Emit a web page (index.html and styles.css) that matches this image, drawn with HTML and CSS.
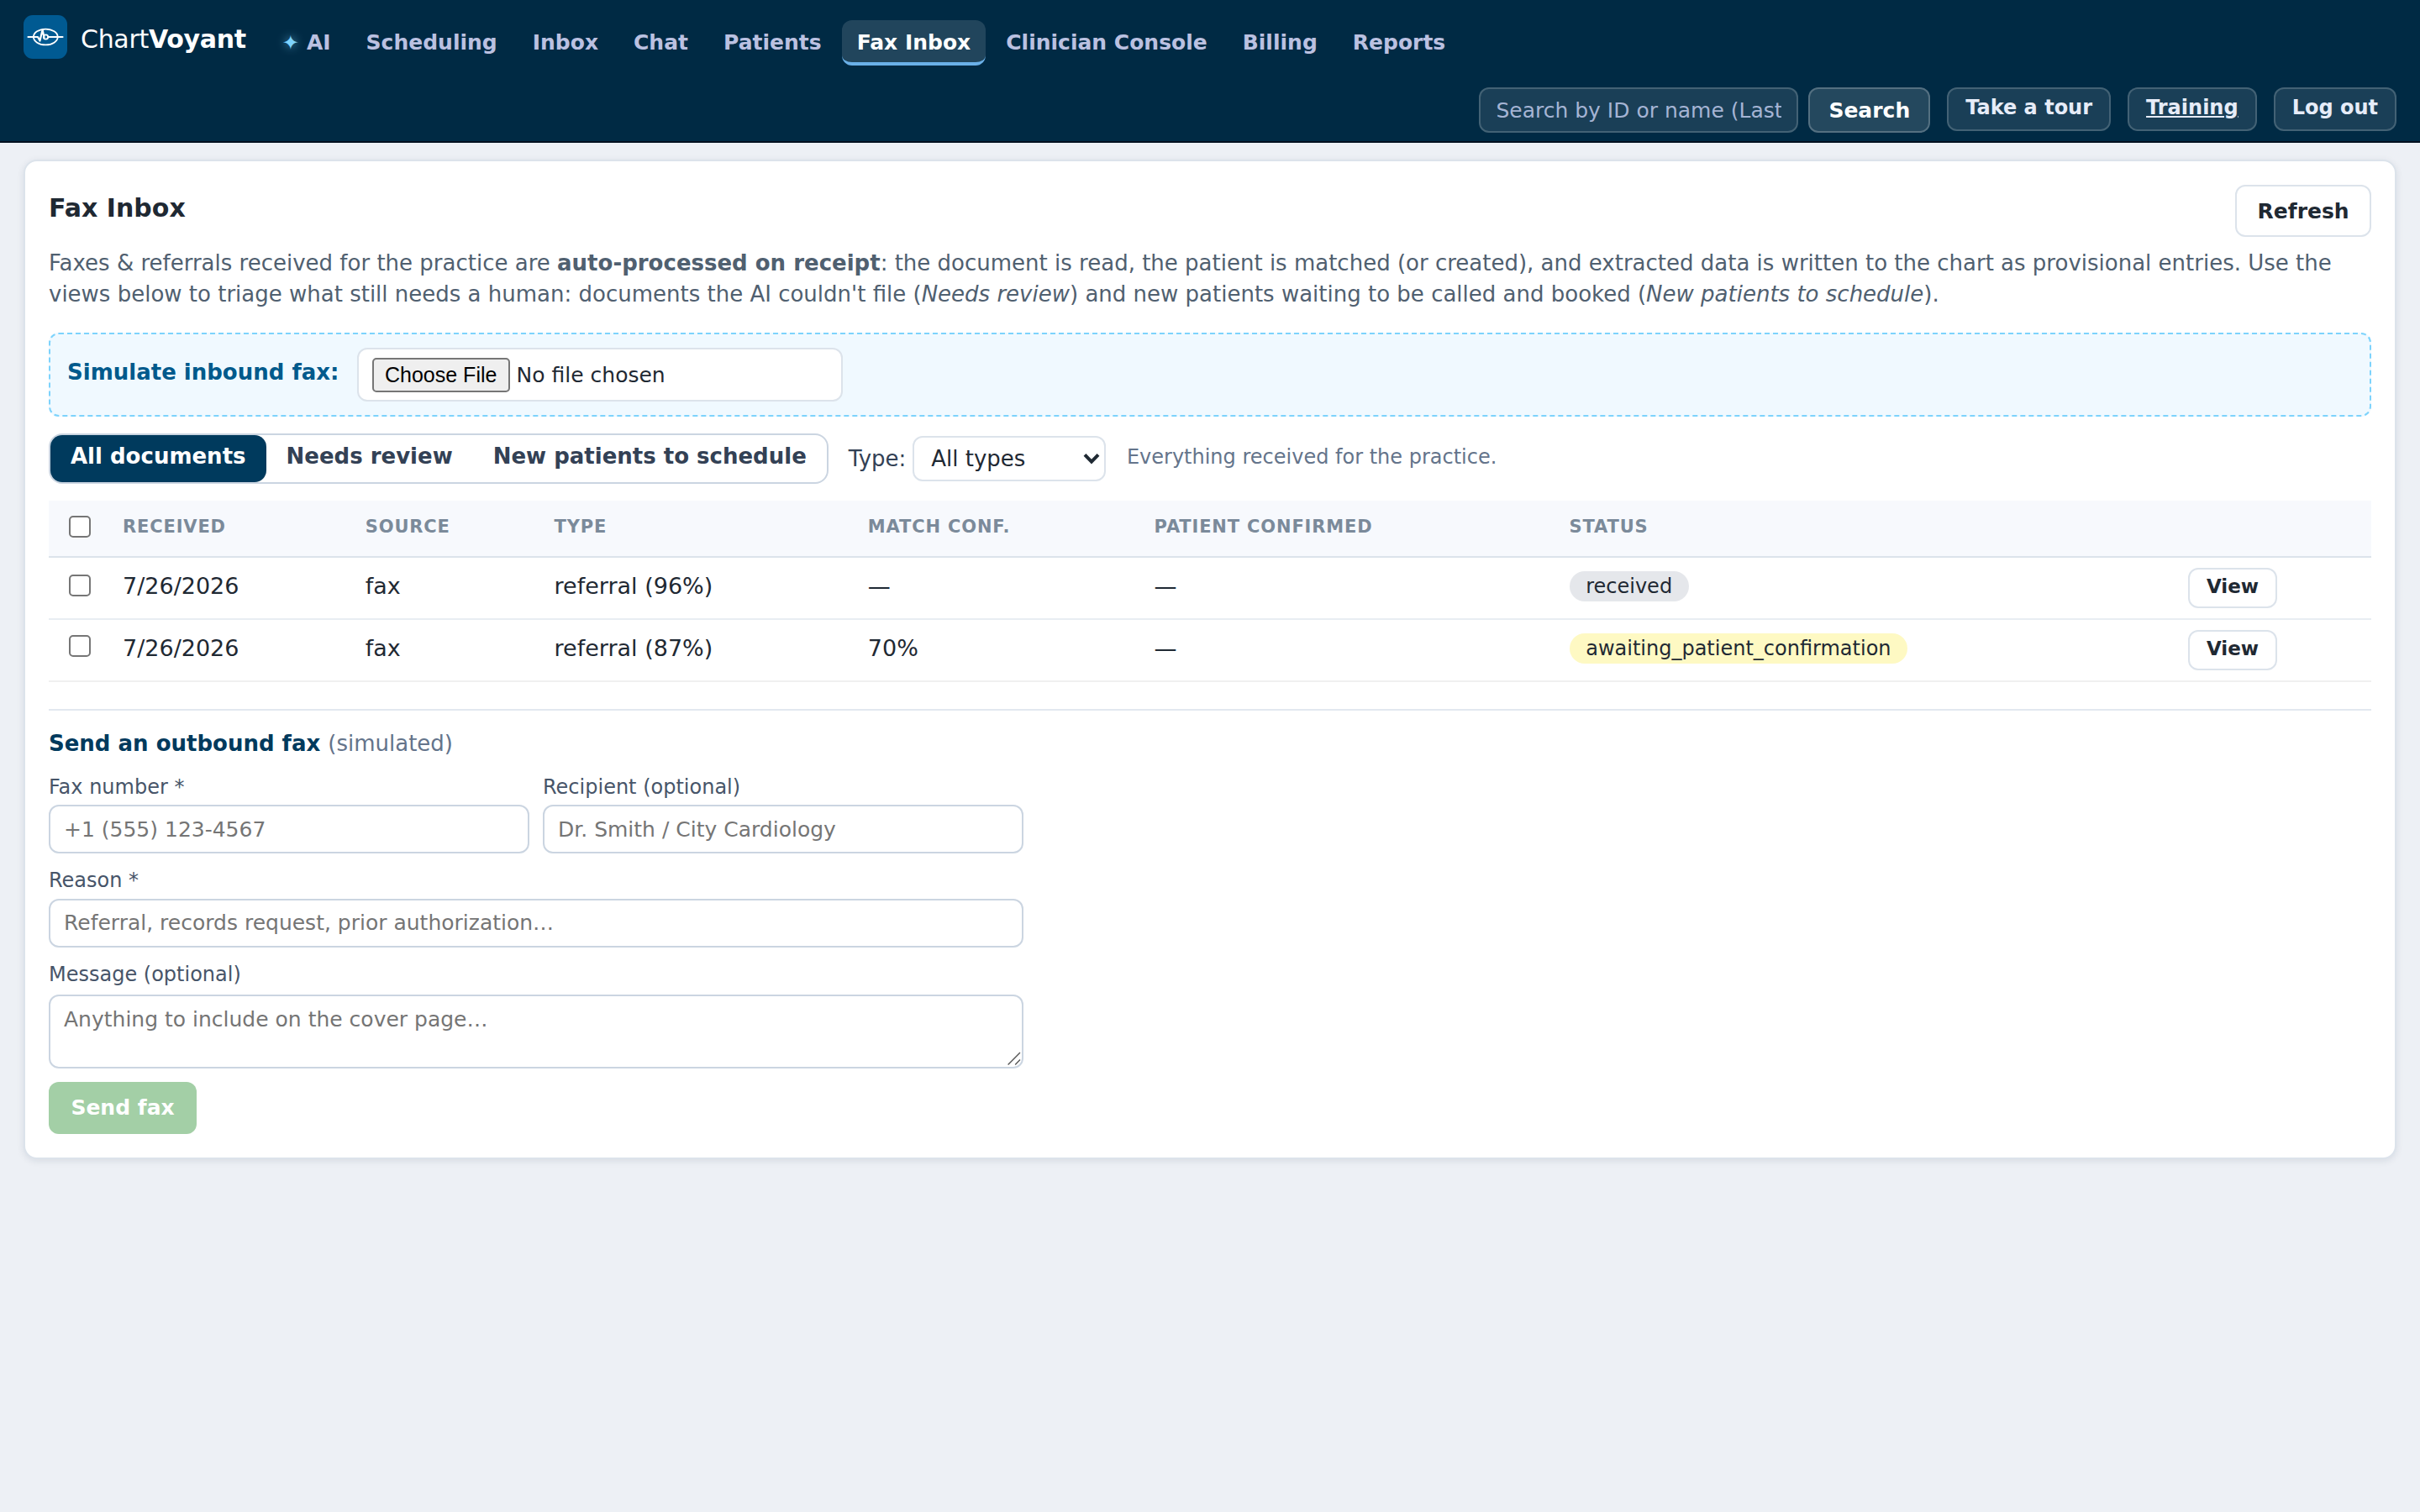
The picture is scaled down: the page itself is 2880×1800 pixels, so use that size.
FILE: index.html
```html
<!DOCTYPE html>
<html lang="en">
<head>
    <meta charset="UTF-8">
    <meta name="viewport" content="width=device-width, initial-scale=1.0">
    <title>ChartVoyant - Fax Inbox</title>
    <link rel="stylesheet" href="styles.css">
</head>
<body>
    <header class="topbar">
        <div class="topbar-main">
            <a class="brand">
                <svg class="brand-logo" viewBox="0 0 52 52" fill="none" stroke="#fff" stroke-width="2.2" stroke-linecap="round" stroke-linejoin="round">
                    <rect width="52" height="52" rx="11" fill="#005a92" stroke="none"/>
                    <ellipse cx="26.3" cy="26" rx="14.4" ry="9.4" stroke-width="1.8"/>
                    <path d="M5.5 26H17l2.5 4.5L22.6 17.5l1.9 9"/>
                    <circle cx="26.5" cy="26" r="2.7" stroke-width="1.8"/>
                    <path d="M29.5 26h17"/>
                </svg>
                <span class="brand-name">Chart<b>Voyant</b></span>
            </a>
            <nav class="nav">
                <a class="nav-link"><span class="spark">✦</span>AI</a>
                <a class="nav-link">Scheduling</a>
                <a class="nav-link">Inbox</a>
                <a class="nav-link">Chat</a>
                <a class="nav-link">Patients</a>
                <a class="nav-link active">Fax Inbox</a>
                <a class="nav-link">Clinician Console</a>
                <a class="nav-link">Billing</a>
                <a class="nav-link">Reports</a>
            </nav>
        </div>
        <div class="topbar-tools">
            <form class="search">
                <input class="search-input" type="text" placeholder="Search by ID or name (Last, First)">
                <button class="search-btn" type="button">Search</button>
            </form>
            <a class="tool-btn">Take a tour</a>
            <a class="tool-btn underlined">Training</a>
            <a class="tool-btn">Log out</a>
        </div>
    </header>

    <main class="card">
        <div class="card-head">
            <h1>Fax Inbox</h1>
            <button class="btn">Refresh</button>
        </div>
        <p class="intro">
            Faxes &amp; referrals received for the practice are <b>auto-processed on receipt</b>: the document is read, the patient is matched (or created), and extracted data is written to the chart as provisional entries. Use the views below to triage what still needs a human: documents the AI couldn't file (<i>Needs review</i>) and new patients waiting to be called and booked (<i>New patients to schedule</i>).
        </p>

        <div class="simulate">
            <label class="simulate-label" for="faxFile">Simulate inbound fax:</label>
            <input class="file-input" id="faxFile" type="file">
        </div>

        <div class="filters">
            <div class="tabs">
                <button class="tab active">All documents</button>
                <button class="tab">Needs review</button>
                <button class="tab">New patients to schedule</button>
            </div>
            <label class="type-filter">Type:
                <span class="select-wrap">
                    <select class="type-select">
                        <option>All types</option>
                    </select>
                    <svg class="select-arrow" viewBox="0 0 10 7" fill="none" stroke="#1f2933" stroke-width="2">
                        <path d="M1 1.2l4 4.1 4-4.1"/>
                    </svg>
                </span>
            </label>
            <span class="hint">Everything received for the practice.</span>
        </div>

        <table class="docs">
            <colgroup>
                <col class="col-check">
                <col class="col-received">
                <col class="col-source">
                <col class="col-type">
                <col class="col-match">
                <col class="col-confirmed">
                <col class="col-status">
                <col>
            </colgroup>
            <thead>
                <tr>
                    <th><input type="checkbox"></th>
                    <th>Received</th>
                    <th>Source</th>
                    <th>Type</th>
                    <th>Match conf.</th>
                    <th>Patient confirmed</th>
                    <th>Status</th>
                    <th></th>
                </tr>
            </thead>
            <tbody>
                <tr>
                    <td><input type="checkbox"></td>
                    <td>7/26/2026</td>
                    <td>fax</td>
                    <td>referral (96%)</td>
                    <td>—</td>
                    <td>—</td>
                    <td><span class="pill">received</span></td>
                    <td class="actions"><button class="btn btn-small">View</button></td>
                </tr>
                <tr>
                    <td><input type="checkbox"></td>
                    <td>7/26/2026</td>
                    <td>fax</td>
                    <td>referral (87%)</td>
                    <td>70%</td>
                    <td>—</td>
                    <td><span class="pill pill-waiting">awaiting_patient_confirmation</span></td>
                    <td class="actions"><button class="btn btn-small">View</button></td>
                </tr>
            </tbody>
        </table>

        <section class="outbound">
            <h2>Send an outbound fax <span>(simulated)</span></h2>
            <form class="fax-form">
                <div class="field-row">
                    <label class="field">Fax number *
                        <input type="text" placeholder="+1 (555) 123-4567">
                    </label>
                    <label class="field">Recipient (optional)
                        <input type="text" placeholder="Dr. Smith / City Cardiology">
                    </label>
                </div>
                <label class="field">Reason *
                    <input type="text" placeholder="Referral, records request, prior authorization…">
                </label>
                <label class="field message-field">Message (optional)
                    <textarea placeholder="Anything to include on the cover page…"></textarea>
                    <svg class="resize-grip" viewBox="0 0 8 8" stroke="#555" stroke-width="0.7">
                        <path d="M0.3 7.7l7.2-7.2M4.6 7.7l2.9-2.9"/>
                    </svg>
                </label>
                <button class="send-btn" type="button" disabled>Send fax</button>
            </form>
        </section>
    </main>
</body>
</html>
```

FILE: styles.css
```css
* {
    box-sizing: border-box;
}
html {
    zoom: 2;
}
body {
    margin: 0;
    background: #edf0f5;
    color: #1f2933;
    font-family: "DejaVu Sans", sans-serif;
    font-size: 13px;
    line-height: 1.4;
}
button, input, select, textarea {
    font-family: inherit;
    font-size: 12.5px;
}

/* top bar */
.topbar {
    height: 85px;
    padding: 9px 14px 0;
    background: #002a44;
    border-bottom: 1px solid #00101f;
}
.topbar-main {
    display: flex;
    align-items: flex-start;
    height: 43px;
}
.brand {
    display: flex;
    align-items: center;
    gap: 8px;
    margin-right: 12.5px;
    color: #fff;
}
.brand-logo {
    display: block;
    width: 26px;
    height: 26px;
}
.brand-name {
    font-size: 15px;
    line-height: 18px;
    padding-top: 3px;
    letter-spacing: -0.15px;
}
.nav {
    display: flex;
    gap: 3px;
    padding-top: 3px;
}
.nav-link {
    height: 27px;
    padding: 6px 9px 4px;
    border-bottom: 2px solid transparent;
    border-radius: 6px;
    color: #bbc1e1;
    font-size: 12.5px;
    font-weight: bold;
    line-height: 15px;
    white-space: nowrap;
}
.nav-link.active {
    background: rgba(255, 255, 255, 0.13);
    border-bottom-color: #6ab0e8;
    color: #fff;
}
.spark {
    margin-right: 4.5px;
    color: #7dd3fc;
    font-size: 12px;
    font-weight: normal;
    text-shadow: 0 0 6px rgba(125, 211, 252, 0.7);
}
.topbar-tools {
    display: flex;
    justify-content: flex-end;
    align-items: flex-start;
    gap: 10px;
}
.search {
    display: flex;
    gap: 6px;
}
.search-input {
    width: 190px;
    height: 27px;
    padding: 0 9px;
    background: rgba(255, 255, 255, 0.1);
    border: 1px solid rgba(255, 255, 255, 0.18);
    border-radius: 6px;
    color: #fff;
}
.search-input::placeholder {
    color: #a5b4d4;
}
.search-btn {
    height: 27px;
    padding: 0 11px;
    background: rgba(255, 255, 255, 0.14);
    border: 1px solid rgba(255, 255, 255, 0.22);
    border-radius: 6px;
    color: #fff;
    font-weight: bold;
}
.tool-btn {
    height: 26px;
    padding: 4px 10px 6px;
    background: rgba(255, 255, 255, 0.1);
    border: 1px solid rgba(255, 255, 255, 0.18);
    border-radius: 6px;
    color: #e6ecf8;
    font-size: 12px;
    font-weight: bold;
    line-height: 14px;
}
.tool-btn.underlined {
    text-decoration: underline;
}

/* card */
.card {
    margin: 10px 14px;
    padding: 14px;
    background: #fff;
    border: 1px solid #dce3eb;
    border-radius: 8px;
    box-shadow: 0 1px 4px rgba(15, 40, 70, 0.1);
}
.card-head {
    display: flex;
    justify-content: space-between;
    align-items: center;
}
h1 {
    margin: 0 0 3px;
    font-size: 15px;
}
.btn {
    padding: 7.5px 12.2px 6.5px;
    background: #fff;
    border: 1px solid #dce3eb;
    border-radius: 6px;
    color: #1f2933;
    font-weight: bold;
    line-height: 15px;
}
.btn-small {
    display: block;
    padding: 3px 10px 5px;
    font-size: 11.5px;
    line-height: 14px;
}
.intro {
    margin: 6.6px 0 14px;
    color: #506070;
}
.simulate {
    display: flex;
    align-items: center;
    gap: 10.7px;
    height: 50px;
    padding: 0 10px;
    background: #f0f9ff;
    border: 1px dashed #7dd3fc;
    border-radius: 6px;
}
.simulate-label {
    padding-bottom: 3px;
    color: #005a8c;
    font-weight: bold;
}
.file-input {
    width: 289px;
    height: 32px;
    padding: 5px 8px;
    background: #fff;
    border: 1px solid #dce3eb;
    border-radius: 6px;
    color: #1f2933;
}
.file-input::file-selector-button {
    padding: 1px 5.6px;
}

/* filters */
.filters {
    display: flex;
    align-items: center;
    margin: 10px 0;
}
.tabs {
    display: flex;
    height: 30px;
    border: 1px solid #cbd5e1;
    border-radius: 8px;
}
.tab {
    padding: 5px 12px 8px;
    background: none;
    border: none;
    border-radius: 7px;
    color: #334155;
    font-size: 13px;
    font-weight: bold;
    line-height: 15px;
}
.tab.active {
    background: #003a5d;
    color: #fff;
}
.type-filter {
    display: flex;
    align-items: center;
    gap: 4px;
    margin-left: 12px;
    color: #334155;
}
.select-wrap {
    position: relative;
    display: flex;
}
.type-select {
    width: 115px;
    height: 27px;
    padding: 0 10px;
    appearance: none;
    background: #fff;
    border: 1px solid #dce3eb;
    border-radius: 6px;
    color: #1f2933;
    font-size: 13px;
}
.select-arrow {
    position: absolute;
    top: 10px;
    right: 3.5px;
    width: 10px;
    height: 7px;
    pointer-events: none;
}
.hint {
    margin-left: 12.3px;
    padding-bottom: 1px;
    color: #64748b;
    font-size: 12px;
}

/* documents */
.docs {
    width: 100%;
    table-layout: fixed;
    border-collapse: separate;
    border-spacing: 0;
}
.col-check {
    width: 35px;
}
.col-received {
    width: 144.4px;
}
.col-source {
    width: 112.4px;
}
.col-type {
    width: 186.6px;
}
.col-match {
    width: 170.4px;
}
.col-confirmed {
    width: 247px;
}
.col-status {
    width: 368.2px;
}
.docs th {
    height: 34px;
    padding: 0 9px 1px;
    background: #f7f9fd;
    border-bottom: 1px solid #dce3eb;
    color: #7b8a9a;
    font-size: 10.5px;
    letter-spacing: 0.04em;
    text-align: left;
    text-transform: uppercase;
}
.docs th:first-child {
    padding-bottom: 2px;
}
.docs td {
    height: 37px;
    padding: 0 9px 2.5px;
    border-bottom: 1px solid #e8edf2;
    font-size: 13.5px;
}
.docs .actions {
    padding-bottom: 0;
}
.docs tr:last-child td {
    border-bottom-color: #f0f0f0;
}
.docs tbody tr:last-child td:first-child {
    padding-bottom: 5px;
}
.docs input {
    display: block;
    width: 13px;
    height: 13px;
    margin: 0 3px;
}
.pill {
    display: inline-block;
    padding: 2px 9.8px;
    background: #e5e7eb;
    border-radius: 9px;
    font-size: 12px;
    line-height: 14px;
}
.pill-waiting {
    background: #fef9c3;
}

/* outbound fax */
.outbound {
    margin-top: 16px;
    padding-top: 10.4px;
    border-top: 1px solid #e2e8f0;
}
h2 {
    margin: 0 0 8.8px;
    color: #003a5d;
    font-size: 13px;
}
h2 span {
    color: #64748b;
    font-weight: normal;
}
.fax-form {
    display: flex;
    flex-direction: column;
    gap: 8px;
    width: 580px;
}
.field-row {
    display: flex;
    gap: 8px;
}
.field {
    display: flex;
    flex: 1;
    flex-direction: column;
    gap: 2px;
    color: #475569;
    font-size: 12px;
}
.field input {
    height: 29px;
    padding: 6px 8px;
    border: 1px solid #cbd5e1;
    border-radius: 6px;
}
.field textarea {
    height: 44px;
    margin-top: 1px;
    padding: 6.6px 8px;
    border: 1px solid #cbd5e1;
    border-radius: 6px;
    resize: none;
}
.message-field {
    position: relative;
}
.resize-grip {
    position: absolute;
    right: 1.3px;
    bottom: 2px;
    width: 8px;
    height: 8px;
}
.send-btn {
    align-self: flex-start;
    height: 31px;
    padding: 0 13.2px;
    background: #a3cfa6;
    border: none;
    border-radius: 6px;
    color: #fff;
    font-weight: bold;
}
```
